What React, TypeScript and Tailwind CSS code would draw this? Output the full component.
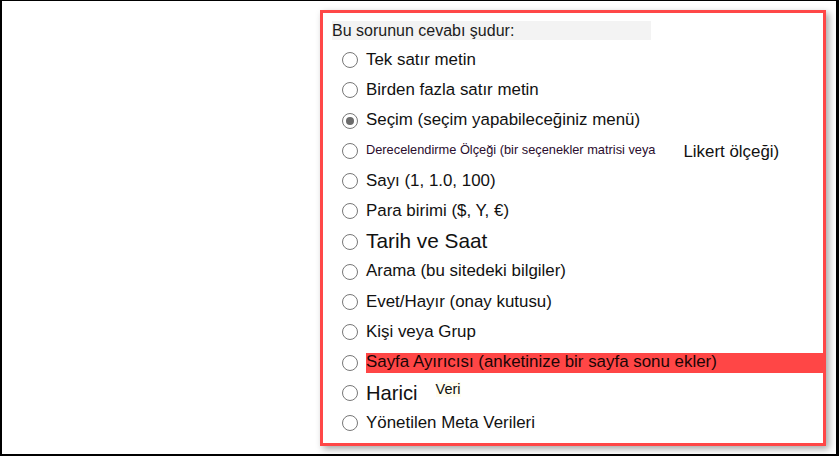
import React from "react";

type Row = { key: string; selected?: boolean; content: React.ReactNode };

function Radio({ checked }: { checked?: boolean }) {
    return (
        <span className="flex size-[16px] shrink-0 items-center justify-center rounded-full border-[1.5px] border-[#777777] bg-white">
            {checked && <span className="size-[8px] rounded-full bg-[#6b6b6b]" />}
        </span>
    );
}

const rows: Row[] = [
    { key: "tek", content: <span>Tek satır metin</span> },
    { key: "birden", content: <span>Birden fazla satır metin</span> },
    { key: "secim", selected: true, content: <span>Seçim (seçim yapabileceğiniz menü)</span> },
    {
        key: "derece",
        content: (
            <>
                <span className="text-[12.8px] text-[#2a0d2e]">Derecelendirme Ölçeği (bir seçenekler matrisi veya</span>
                <span className="ml-[28px] mt-[3px]">Likert ölçeği)</span>
            </>
        ),
    },
    { key: "sayi", content: <span>Sayı (1, 1.0, 100)</span> },
    { key: "para", content: <span>Para birimi ($, Y, €)</span> },
    { key: "tarih", content: <span className="text-[20.8px]">Tarih ve Saat</span> },
    { key: "arama", content: <span>Arama (bu sitedeki bilgiler)</span> },
    { key: "evet", content: <span>Evet/Hayır (onay kutusu)</span> },
    { key: "kisi", content: <span>Kişi veya Grup</span> },
    {
        key: "sayfa",
        content: (
            <span className="flex h-[20px] flex-1 items-center bg-[#ff4646] text-[#1a0505]">
                Sayfa Ayırıcısı (anketinize bir sayfa sonu ekler)
            </span>
        ),
    },
    {
        key: "harici",
        content: (
            <>
                <span className="text-[20.2px]">Harici</span>
                <span className="mb-[7px] ml-[18px] bg-[#fffdf0] text-[14.5px]">Veri</span>
            </>
        ),
    },
    { key: "yonetilen", content: <span>Yönetilen Meta Verileri</span> },
];

export default function App() {
    return (
        <div className="h-[456px] w-[839px] overflow-hidden bg-white">
            <div className="h-[456px] border-t border-r-[3px] border-b-2 border-l-2 border-black pl-[318px] pt-[9px] font-['Liberation_Sans',Arial,sans-serif] text-[#111111]">
                {/* Answer type panel */}
                <div className="h-[436px] w-[506px] border-[3px] border-[#ff4747] bg-white shadow-[3px_3px_7px_rgba(0,0,0,0.35)]">
                    <div className="pt-[8px]">
                        <div className="ml-[9px] h-[19px] w-[319px] bg-[#f3f3f3] text-[16px] leading-[19px] text-[#1c1c1c]">
                            Bu sorunun cevabı şudur:
                        </div>
                        <div className="mt-[5px] flex flex-col">
                            {rows.map((row) => (
                                <div key={row.key} className="flex h-[30.25px] items-center pl-[19px] text-[16.9px] leading-none">
                                    <Radio checked={row.selected} />
                                    <div className="ml-[8px] flex flex-1 items-center">{row.content}</div>
                                </div>
                            ))}
                        </div>
                    </div>
                </div>
            </div>
        </div>
    );
}
